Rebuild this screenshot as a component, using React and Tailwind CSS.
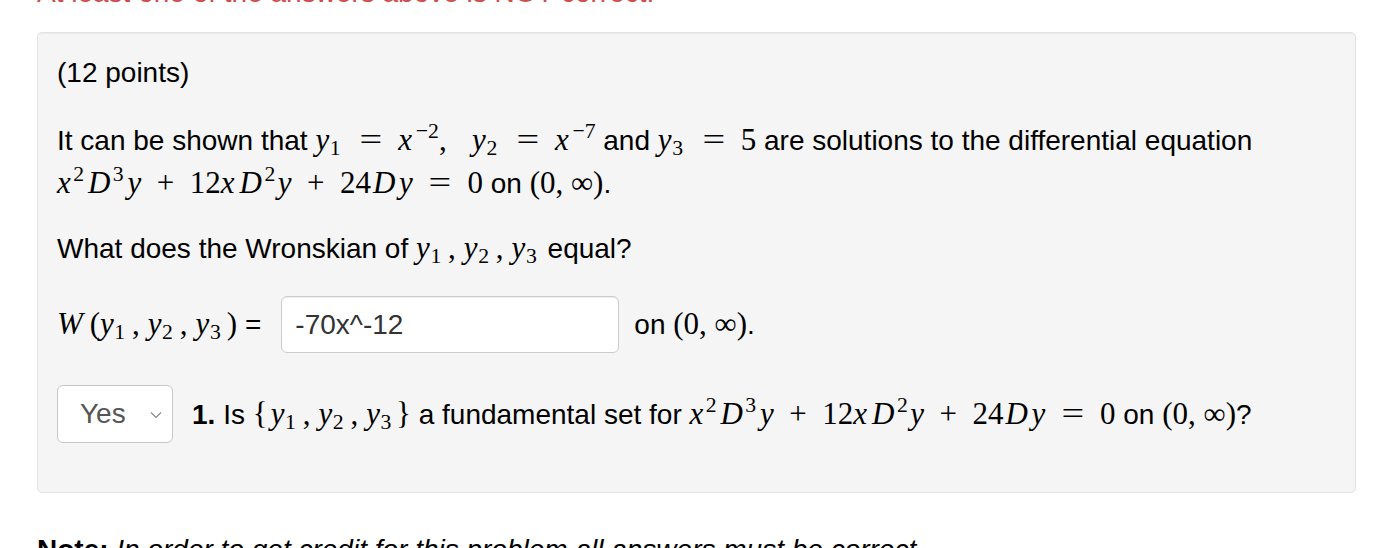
import React from "react";

const Sub = ({ children, className = "" }) => (
  <span className={"text-[0.7em] align-[-0.25em] leading-[0] " + className}>{children}</span>
);
const Sup = ({ children, className = "" }) => (
  <span className={"text-[0.7em] align-[0.55em] leading-[0] " + className}>{children}</span>
);
const M = ({ children }) => (
  <span className="font-['Liberation_Serif',serif] text-[31px] whitespace-nowrap">{children}</span>
);
const V = ({ children, className = "" }) => <i className={className}>{children}</i>;
const Eq = () => (
  <span className="mx-[0.6em] inline-block scale-x-[1.3]">=</span>
);
const Op = ({ children }) => <span className="mx-[0.5em]">{children}</span>;

const Y = ({ n }) => (
  <span>
    <V className="mr-[0.02em]">y</V>
    <Sub className="mr-[0.14em]">{n}</Sub>
  </span>
);

const DE = () => (
  <M>
    <V className="mr-[0.08em]">x</V>
    <Sup className="mr-[0.18em]">2</Sup>
    <V className="mr-[0.08em]">D</V>
    <Sup className="mr-[0.18em]">3</Sup>
    <V>y</V>
    <Op>+</Op>
    12
    <V className="mr-[0.16em]">x</V>
    <V className="mr-[0.08em]">D</V>
    <Sup className="mr-[0.12em]">2</Sup>
    <V>y</V>
    <Op>+</Op>
    24
    <V className="ml-[0.06em] mr-[0.12em]">D</V>
    <V>y</V>
    <Eq />0
  </M>
);

const Interval = () => <M>(0, ∞)</M>;

const Triple = () => (
  <>
    <Y n="1" />
    <span className="ml-[0.12em]">,</span>
    <span className="ml-[0.26em]">
      <Y n="2" />
    </span>
    <span className="ml-[0.12em]">,</span>
    <span className="ml-[0.26em]">
      <Y n="3" />
    </span>
  </>
);

export default function App() {
  return (
    <div className="w-[1392px] h-[548px] overflow-hidden bg-white font-['Liberation_Sans',Arial,sans-serif] text-[28px] text-black">
      <div className="pl-[37px] mt-[-24px] leading-[34px] text-[#d24b4b]">
        At least one of the answers above is NOT correct.
      </div>

      <div className="ml-[37px] mt-[22px] w-[1319px] rounded-[5px] border border-[#e3e3e3] bg-[#f5f5f5] shadow-[inset_0_1px_1px_rgba(0,0,0,0.05)] px-[19px] pt-[20px] pb-[49px]">
        <div className="leading-[40px]">(12 points)</div>

        <div className="mt-[26px] leading-[42px]">
          It can be shown that{" "}
          <M>
            <Y n="1" />
            <Eq />
            <V className="mr-[0.12em]">x</V>
            <Sup>−2</Sup>,
            <span className="ml-[0.82em]">
              <Y n="2" />
            </span>
            <Eq />
            <V className="mr-[0.12em]">x</V>
            <Sup>−7</Sup>
          </M>{" "}
          and{" "}
          <M>
            <Y n="3" />
            <Eq />5
          </M>{" "}
          are solutions to the differential equation <DE /> on <Interval />.
        </div>

        <div className="mt-[22px] leading-[42px]">
          What does the Wronskian of{" "}
          <M>
            <Triple />
          </M>{" "}
          equal?
        </div>

        <div className="mt-[26px] flex items-center">
          <span className="leading-[42px]">
            <M>
              <V className="mr-[0.22em]">W</V>(<Triple />
              <span className="ml-[0.1em]">)</span>
            </M>{" "}
            =
          </span>
          <div className="ml-[20px] flex h-[57px] w-[338px] items-center rounded-[6px] border border-[#cccccc] bg-white pl-[13px] text-[#333333] shadow-[inset_0_1px_1px_rgba(0,0,0,0.075)]">
            -70x^-12
          </div>
          <span className="ml-[15px] leading-[42px]">
            on <Interval />.
          </span>
        </div>

        <div className="mt-[32px] flex items-center">
          <div className="flex h-[58px] w-[116px] items-center justify-between rounded-[6px] border border-[#c8c8c8] bg-white pl-[22px] pr-[10px] text-[#555555]">
            <span>Yes</span>
            <svg width="12" height="8" viewBox="0 0 12 8" className="mt-[2px]">
              <path d="M1 1.5 L6 6.5 L11 1.5" fill="none" stroke="#8a8a8a" strokeWidth="1.2" />
            </svg>
          </div>
          <span className="ml-[19px] leading-[42px]">
            <b>1.</b> Is{" "}
            <M>
              {"{"}
              <span className="ml-[0.1em]">
                <Triple />
              </span>
              <span className="ml-[0.05em]">{"}"}</span>
            </M>{" "}
            a fundamental set for <DE /> on <Interval />?
          </span>
        </div>
      </div>

      <div className="pl-[37px] mt-[37px] leading-[40px]">
        <b>Note:</b>{" "}
        <i>In order to get credit for this problem all answers must be correct.</i>
      </div>
    </div>
  );
}
